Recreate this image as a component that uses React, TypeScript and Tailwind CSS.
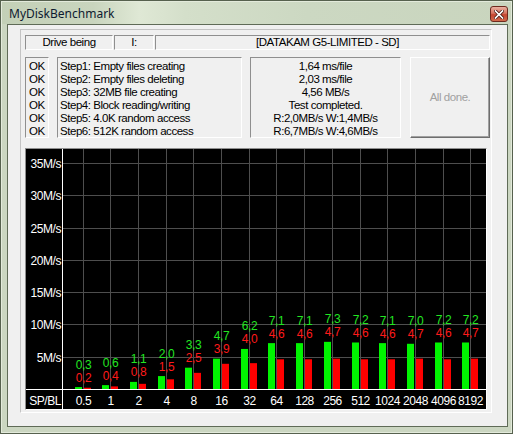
import React from 'react';

const cats = ['0.5', '1', '2', '4', '8', '16', '32', '64', '128', '256', '512', '1024', '2048', '4096', '8192'];
const rd = [0.3, 0.6, 1.1, 2.0, 3.3, 4.7, 6.2, 7.1, 7.1, 7.3, 7.2, 7.1, 7.0, 7.2, 7.2];
const wr = [0.2, 0.4, 0.8, 1.5, 2.5, 3.9, 4.0, 4.6, 4.6, 4.7, 4.6, 4.6, 4.7, 4.6, 4.7];
const PX = 6.46;
const fmt = (v: number) => v.toFixed(1).replace('.', ',');

function Chart() {
  const hLines = [1, 2, 3, 4, 5, 6, 7].map((k) => ({ k, y: Math.round(240 - k * 32.3) + 0.5 }));
  const fs = '12';
  const ls = '-0.45';
  return (
    <svg width="460" height="260" viewBox="0 0 460 260" className="block bg-black" style={{ fontFamily: '"Liberation Sans", Arial, sans-serif' }}>
      {hLines.map(({ k, y }) => (
        <g key={k}>
          <line x1={36} x2={460} y1={y} y2={y} stroke="#4e4e4e" strokeWidth={1} />
          <text x={35} y={y + 4.5} textAnchor="end" fontSize={fs} letterSpacing={ls} fill="#ffffff">{`${k * 5}M/s`}</text>
        </g>
      ))}
      {cats.map((c, i) => {
        const cx = Math.round(56.5 + i * 27.7);
        return <line key={c} x1={cx + 0.5} x2={cx + 0.5} y1={0} y2={240} stroke="#4e4e4e" strokeWidth={1} />;
      })}
      {cats.map((c, i) => {
        const cx = Math.round(56.5 + i * 27.7);
        const gh = rd[i] * PX;
        const rh = wr[i] * PX;
        const top = 240 - Math.max(gh, rh);
        return (
          <g key={'b' + c}>
            <rect x={cx - 8} y={240 - gh} width={7} height={gh} fill="#00f400" />
            <rect x={cx + 1} y={240 - rh} width={7} height={rh} fill="#ff0000" />
            <text x={cx + 0.5} y={top - 23 + 4.5} textAnchor="middle" fontSize={fs} letterSpacing={ls} fill="#22e622">{fmt(rd[i])}</text>
            <text x={cx + 0.5} y={top - 10 + 4.5} textAnchor="middle" fontSize={fs} letterSpacing={ls} fill="#ff1a1a">{fmt(wr[i])}</text>
            <text x={cx + 0.5} y={255.5} textAnchor="middle" fontSize={fs} letterSpacing={ls} fill="#ffffff">{c}</text>
          </g>
        );
      })}
      <line x1={0} x2={460} y1={240.5} y2={240.5} stroke="#ffffff" strokeWidth={1} />
      <line x1={36.5} x2={36.5} y1={0} y2={260} stroke="#ffffff" strokeWidth={1} />
      <text x={35} y={255.5} textAnchor="end" fontSize={fs} letterSpacing={ls} fill="#ffffff">SP/BL</text>
    </svg>
  );
}

const sunken = 'border border-t-[#8f8f8f] border-l-[#8f8f8f] border-b-white border-r-white';

export default function App() {
  return (
    <div className="w-[513px] h-[434px] border border-[#56614e] bg-[#cbd6c1] font-['Liberation_Sans',Arial,sans-serif] text-[11.5px] tracking-[-0.45px] text-black">
      <div className="w-full h-full flex flex-col border border-[#e3eadb]">
        {/* Title bar */}
        <div className="h-[22px] flex items-start justify-between bg-[linear-gradient(to_right,#c3d0b7_0%,#c9d5be_18%,#dfe8d5_27%,#d4dfca_36%,#ccd8c2_60%,#c9d5be_100%)]">
          <div className="pl-[7px] pt-[4px] text-[12px] leading-[15px] tracking-normal text-[#0d1a30] font-['Noto_Sans',sans-serif]">MyDiskBenchmark</div>
          <div className="mt-[4px] mr-[3px] w-[18px] h-[16px] rounded-[3px] border border-[#6e2a1e] bg-[linear-gradient(to_bottom,#eab2a2_0%,#d7735f_45%,#c5452f_55%,#d26a4c_100%)] flex items-center justify-center">
            <svg width="10" height="9" viewBox="0 0 10 9">
              <path d="M1.5 1 L8.5 8 M8.5 1 L1.5 8" stroke="#4a1a12" strokeWidth="3.2" strokeLinecap="square" />
              <path d="M1.5 1 L8.5 8 M8.5 1 L1.5 8" stroke="#ffffff" strokeWidth="1.7" strokeLinecap="square" />
            </svg>
          </div>
        </div>
        {/* Client area */}
        <div className="flex-1 ml-[5px] mr-[3px] mb-[5px] border border-[#5f6b57] bg-[#f0f0f0]">
          <div className="ml-[12px] mt-[4px] w-[472px] h-[384px] border border-t-[#c4c4c4] border-l-[#c4c4c4] border-b-white border-r-white flex flex-col pl-[4px] pt-[5px]">
            {/* Top row */}
            <div className="flex gap-[1px] h-[15px] leading-[13px]">
              <div className={`w-[88px] ${sunken} text-center`}>Drive being</div>
              <div className={`w-[40px] ${sunken} text-center`}>I:</div>
              <div className={`w-[335px] ${sunken} text-center pl-[10px]`}>[DATAKAM G5-LIMITED - SD]</div>
            </div>
            {/* Second row */}
            <div className="flex mt-[7px] h-[81px] leading-[12.9px]">
              <div className={`w-[24px] ${sunken} pl-[3px] pt-[2px]`}>
                <div>OK</div><div>OK</div><div>OK</div><div>OK</div><div>OK</div><div>OK</div>
              </div>
              <div className={`w-[185px] ml-[8px] ${sunken} pl-[2px] pt-[2px]`}>
                <div>Step1: Empty files creating</div>
                <div>Step2: Empty files deleting</div>
                <div>Step3: 32MB file creating</div>
                <div>Step4: Block reading/writing</div>
                <div>Step5: 4.0K random access</div>
                <div>Step6: 512K random access</div>
              </div>
              <div className={`w-[151px] ml-[8px] ${sunken} pt-[2px] text-center`}>
                <div>1,64 ms/file</div>
                <div>2,03 ms/file</div>
                <div>4,56 MB/s</div>
                <div>Test completed.</div>
                <div>R:2,0MB/s W:1,4MB/s</div>
                <div>R:6,7MB/s W:4,6MB/s</div>
              </div>
              <div className="w-[80px] ml-[9px] border border-t-white border-l-white border-b-[#6e6e6e] border-r-[#6e6e6e] shadow-[inset_-1px_-1px_0_#a0a0a0] flex items-center justify-center text-[#a0a0a0]">
                All done.
              </div>
            </div>
            {/* Chart */}
            <div className={`mt-[10px] w-[462px] h-[262px] ${sunken}`}>
              <Chart />
            </div>
          </div>
        </div>
      </div>
    </div>
  );
}
